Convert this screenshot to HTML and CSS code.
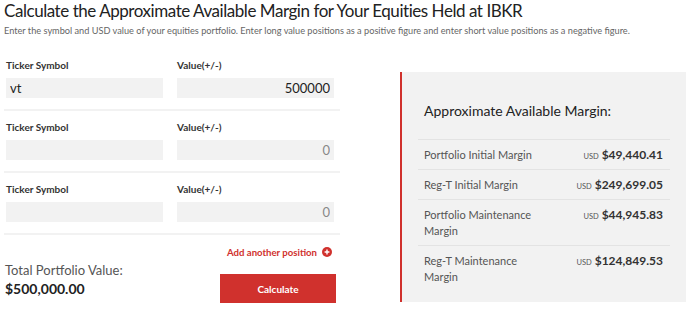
FILE: index.html
```html
<!DOCTYPE html>
<html lang="en">
<head>
    <meta charset="UTF-8">
    <meta name="viewport" content="width=device-width, initial-scale=1.0">
    <title>Margin calculator</title>

    <link rel="stylesheet" href="styles.css">

</head>
<body>

    <div class="header">
        <h1 class="titlu">Calculate the Approximate Available Margin for Your Equities Held at IBKR</h1>
        <p class="subtitlu">Enter the symbol and USD value of your equities portfolio. Enter long value positions as a positive figure and enter short value positions as a negative figure.</p>
    </div>

    <div class="main">

        <div class="calc">

            <div class="pozitie">
                <div class="camp">
                    <label>Ticker Symbol</label>
                    <input type="text" class="input-ticker" value="vt">
                </div>
                <div class="camp">
                    <label>Value(+/-)</label>
                    <input type="text" class="input-valoare" value="500000">
                </div>
            </div>

            <div class="pozitie">
                <div class="camp">
                    <label>Ticker Symbol</label>
                    <input type="text" class="input-ticker" value="">
                </div>
                <div class="camp">
                    <label>Value(+/-)</label>
                    <input type="text" class="input-valoare gol" value="0">
                </div>
            </div>

            <div class="pozitie">
                <div class="camp">
                    <label>Ticker Symbol</label>
                    <input type="text" class="input-ticker" value="">
                </div>
                <div class="camp">
                    <label>Value(+/-)</label>
                    <input type="text" class="input-valoare gol" value="0">
                </div>
            </div>

            <div class="adauga">
                <a href="#">Add another position</a>
                <svg class="plus" width="10" height="10" viewBox="0 0 10 10">
                    <circle cx="5" cy="5" r="5" fill="#d0312d"/>
                    <path d="M5 2.6v4.8M2.6 5h4.8" stroke="#fff" stroke-width="1.4"/>
                </svg>
            </div>

            <div class="subsol">
                <div class="total">
                    <div class="total-text">Total Portfolio Value:</div>
                    <div class="total-suma">$500,000.00</div>
                </div>
                <button class="buton">Calculate</button>
            </div>

        </div>

        <div class="rezultat">
            <h2 class="rezultat-titlu">Approximate Available Margin:</h2>

            <div class="rand">
                <span class="eticheta">Portfolio Initial Margin</span>
                <span class="suma"><small>USD</small> $49,440.41</span>
            </div>
            <div class="rand">
                <span class="eticheta">Reg-T Initial Margin</span>
                <span class="suma"><small>USD</small> $249,699.05</span>
            </div>
            <div class="rand">
                <span class="eticheta">Portfolio Maintenance Margin</span>
                <span class="suma"><small>USD</small> $44,945.83</span>
            </div>
            <div class="rand">
                <span class="eticheta">Reg-T Maintenance Margin</span>
                <span class="suma"><small>USD</small> $124,849.53</span>
            </div>
        </div>

    </div>

</body>
</html>
```

FILE: styles.css
```css
:root {
    --rosu: #d0312d;
    --gri-fundal: #f2f2f2;
}

*, *::before, *::after {
    margin: 0;
    padding: 0;
    box-sizing: border-box;
}

body {
    width: 100%;
    background-color: white;
    font-family: "Lato", "Open Sans", sans-serif;
    color: #333;
    padding: 0 4px;
}

.header {
    padding-top: 1px;
    height: 49px;
}

.titlu {
    font-size: 17px;
    letter-spacing: -0.45px;
    font-weight: 400;
    line-height: 20px;
    color: #222;
}

.subtitlu {
    font-size: 9.2px;
    line-height: 12px;
    color: #666;
    margin-top: 4px;
    white-space: nowrap;
}

.main {
    display: flex;
    gap: 60px;
}

.calc {
    width: 336px;
}

.pozitie {
    display: grid;
    grid-template-columns: 157px 157px;
    gap: 14px;
    padding: 10px 6px 11px 2px;
    border-bottom: 2px solid var(--gri-fundal);
}

.camp label {
    display: block;
    font-size: 10px;
    line-height: 12px;
    font-weight: 700;
    color: #333;
    margin-bottom: 7px;
}

.camp input {
    display: block;
    width: 100%;
    height: 20px;
    border: none;
    outline: none;
    background-color: var(--gri-fundal);
    font-family: inherit;
    font-size: 13px;
    color: #222;
    padding: 0 4px;
}

.input-valoare {
    text-align: right;
}

.input-valoare.gol {
    color: #888;
}

.adauga {
    display: flex;
    justify-content: flex-end;
    align-items: center;
    gap: 5px;
    margin-top: 10px;
    height: 14px;
    padding-right: 8px;
}

.adauga a {
    font-size: 9.6px;
    font-weight: 700;
    color: var(--rosu);
    text-decoration: none;
}

.subsol {
    display: flex;
    justify-content: space-between;
    padding-right: 4px;
    margin-top: 3px;
}

.total {
    padding-left: 1px;
}

.total-text {
    font-size: 13px;
    line-height: 16px;
    color: #555;
}

.total-suma {
    font-size: 14px;
    line-height: 16px;
    font-weight: 700;
    color: #222;
    margin-top: 3px;
}

.buton {
    width: 116px;
    height: 29px;
    margin-top: 12px;
    border: none;
    background-color: var(--rosu);
    color: white;
    font-family: inherit;
    font-size: 10px;
    font-weight: 700;
    cursor: pointer;
}

.rezultat {
    width: 286px;
    height: 230px;
    margin-top: 23px;
    background-color: var(--gri-fundal);
    border-left: 2px solid var(--rosu);
    padding: 30px 16px 0 16px;
}

.rezultat-titlu {
    font-size: 14px;
    font-weight: 400;
    line-height: 18px;
    color: #222;
    padding-left: 6px;
    margin-bottom: 19px;
}

.rand {
    display: flex;
    justify-content: space-between;
    align-items: flex-start;
    border-top: 1px solid #e3e3e3;
    padding: 7px 7px 6px 6px;
    font-size: 11px;
    line-height: 16px;
}

.eticheta {
    color: #555;
    max-width: 120px;
}

.suma {
    display: block;
    font-weight: 700;
    font-size: 12px;
    line-height: 16px;
    color: #333;
    white-space: nowrap;
}

.suma small {
    font-size: 7.5px;
    line-height: 1;
    font-weight: 400;
    color: #555;
}
```
